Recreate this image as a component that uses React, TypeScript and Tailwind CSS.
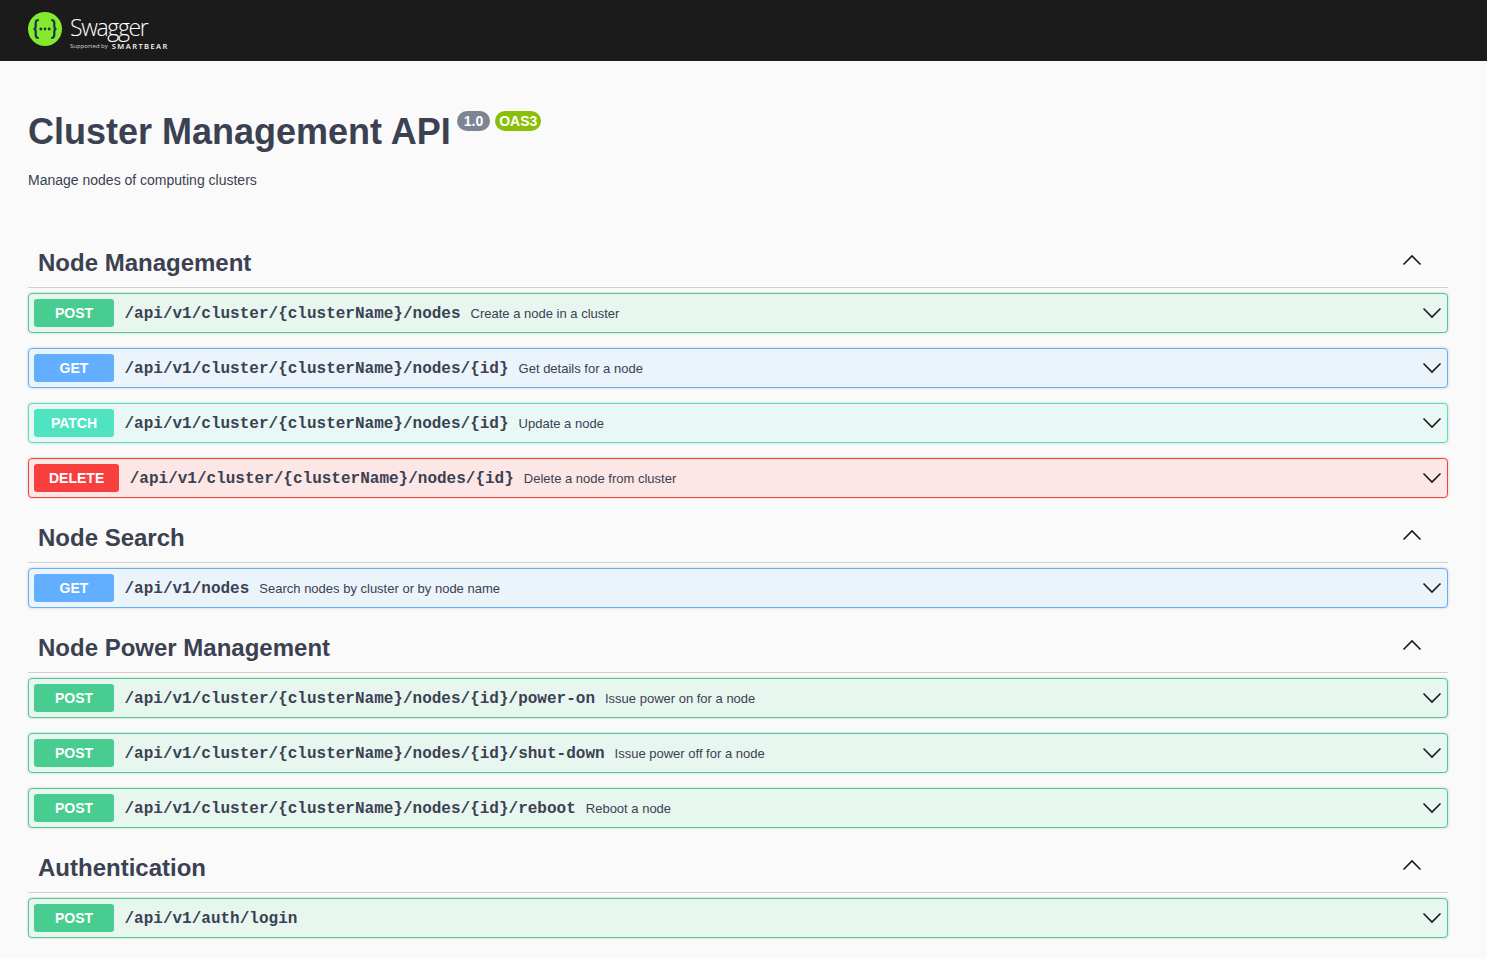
const sans = '[font-family:"Liberation_Sans",Arial,sans-serif]';

type Method = 'POST' | 'GET' | 'PATCH' | 'DELETE';

const rowStyles: Record<Method, { row: string; badge: string }> = {
  POST: { row: 'border-[#49cc90] bg-[#e8f6f0]', badge: 'bg-[#49cc90]' },
  GET: { row: 'border-[#61affe] bg-[#ebf3fb]', badge: 'bg-[#61affe]' },
  PATCH: { row: 'border-[#50e3c2] bg-[#e9f8f5]', badge: 'bg-[#50e3c2]' },
  DELETE: { row: 'border-[#f93e3e] bg-[#fce6e6]', badge: 'bg-[#f93e3e]' },
};

const sections: {
  title: string;
  ops: { method: Method; path: string; summary?: string }[];
}[] = [
  {
    title: 'Node Management',
    ops: [
      { method: 'POST', path: '/api/v1/cluster/{clusterName}/nodes', summary: 'Create a node in a cluster' },
      { method: 'GET', path: '/api/v1/cluster/{clusterName}/nodes/{id}', summary: 'Get details for a node' },
      { method: 'PATCH', path: '/api/v1/cluster/{clusterName}/nodes/{id}', summary: 'Update a node' },
      { method: 'DELETE', path: '/api/v1/cluster/{clusterName}/nodes/{id}', summary: 'Delete a node from cluster' },
    ],
  },
  {
    title: 'Node Search',
    ops: [{ method: 'GET', path: '/api/v1/nodes', summary: 'Search nodes by cluster or by node name' }],
  },
  {
    title: 'Node Power Management',
    ops: [
      { method: 'POST', path: '/api/v1/cluster/{clusterName}/nodes/{id}/power-on', summary: 'Issue power on for a node' },
      { method: 'POST', path: '/api/v1/cluster/{clusterName}/nodes/{id}/shut-down', summary: 'Issue power off for a node' },
      { method: 'POST', path: '/api/v1/cluster/{clusterName}/nodes/{id}/reboot', summary: 'Reboot a node' },
    ],
  },
  {
    title: 'Authentication',
    ops: [{ method: 'POST', path: '/api/v1/auth/login' }],
  },
];

function Chevron({ up = false }: { up?: boolean }) {
  return (
    <svg viewBox="0 0 20 20" className="h-5 w-5 shrink-0" fill="none" stroke="#1a1a1a" strokeWidth="1.6">
      <polyline points={up ? '1.5,14.5 10,6 18.5,14.5' : '1.5,5.5 10,14 18.5,5.5'} />
    </svg>
  );
}

function Logo() {
  return (
    <div className="flex items-start">
      <svg viewBox="0 0 34 34" className="mt-[12px] h-[34px] w-[34px] shrink-0">
        <circle cx="17" cy="17" r="17" fill="#85ea2d" />
        <g fill="none" stroke="#173647" strokeWidth="2.2">
          <path d="M10.8 8c-2.4 0-3.1 1.2-3.1 3v3.6c0 1.4-.8 2.4-2.2 2.4 1.4 0 2.2 1 2.2 2.4V23c0 1.8.7 3 3.1 3" />
          <path d="M23.2 8c2.4 0 3.1 1.2 3.1 3v3.6c0 1.4.8 2.4 2.2 2.4-1.4 0-2.2 1-2.2 2.4V23c0 1.8-.7 3-3.1 3" />
        </g>
        <circle cx="12.8" cy="17" r="1.4" fill="#173647" />
        <circle cx="17" cy="17" r="1.4" fill="#173647" />
        <circle cx="21.2" cy="17" r="1.4" fill="#173647" />
      </svg>
      <div className="ml-[8px] flex flex-col text-white">
        <div className='mt-[13px] flex h-[28px] font-["Open_Sans",sans-serif] text-[23px] leading-[28px] font-light tracking-[-1.35px]'>
          Swagger
        </div>
        <div className="mt-[1px] flex h-[9px] items-center gap-[4px] leading-[9px] whitespace-nowrap">
          <span className='font-["Open_Sans",sans-serif] text-[6px] text-[#d8d8d8]'>Supported by</span>
          <span className='font-["Open_Sans",sans-serif] text-[7.5px] font-semibold tracking-[1.45px]'>SMARTBEAR</span>
        </div>
      </div>
    </div>
  );
}

function OperationRow({ method, path, summary }: { method: Method; path: string; summary?: string }) {
  const s = rowStyles[method];
  return (
    <div className={`mb-[15px] flex h-[40px] items-center rounded-[4px] border pl-[5px] shadow-[0_0_3px_rgba(0,0,0,0.19)] ${s.row}`}>
      <div className={`flex h-[28px] min-w-[80px] items-center justify-center rounded-[3px] px-[15px] text-[14px] font-bold text-white ${s.badge}`}>
        {method}
      </div>
      <div className='translate-y-[1px] pr-[10px] pl-[10.5px] font-["Liberation_Mono",monospace] text-[16px] font-bold text-[#3b4151]'>{path}</div>
      {summary && <div className="translate-y-[1px] text-[13px] text-[#3b4151]">{summary}</div>}
      <div className="mr-[5px] ml-auto">
        <Chevron />
      </div>
    </div>
  );
}

export default function App() {
  return (
    <div className={`min-h-[959px] overflow-hidden bg-[#fafafa] text-[#3b4151] ${sans}`}>
      <div className="flex h-[61px] bg-[#1b1b1b] pl-[28px]">
        <Logo />
      </div>

      <div className="pr-[39px] pl-[28px]">
        <div className="flex h-[177px] flex-col">
          <div className="mt-[50px] flex items-start">
            <h1 className="text-[36px] leading-[42px] font-bold whitespace-nowrap">Cluster Management API</h1>
            <span className="ml-[6px] flex h-[20px] items-center rounded-full bg-[#7d8492] px-[7px] text-[14px] font-bold text-white">
              1.0
            </span>
            <span className="ml-[5px] flex h-[20px] items-center rounded-full bg-[#89bf04] px-[4px] text-[14px] font-bold text-white">
              OAS3
            </span>
          </div>
          <p className="mt-[17px] text-[14px] leading-[20px]">Manage nodes of computing clusters</p>
        </div>

        {sections.map((section) => (
          <section key={section.title}>
            <div className="mb-[5px] flex h-[50px] items-center border-b border-[#cfcfd1] pr-[26px] pl-[10px]">
              <h2 className="text-[24px] leading-[30px] font-bold">{section.title}</h2>
              <div className="ml-auto -translate-y-[3px]">
                <Chevron up />
              </div>
            </div>
            {section.ops.map((op) => (
              <OperationRow key={op.method + op.path} {...op} />
            ))}
          </section>
        ))}
      </div>
    </div>
  );
}
